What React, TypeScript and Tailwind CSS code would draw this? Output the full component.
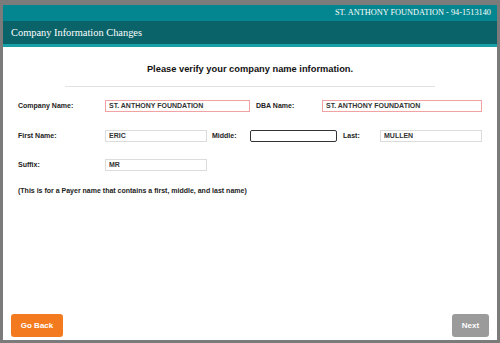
import React from "react";

const label = "text-[7px] font-bold text-[#222]";
const field =
  "h-[12px] bg-white px-[3px] text-[7px] font-bold text-[#333] leading-[10px] outline-none";

export default function App() {
  return (
    <div className="flex h-[343px] w-[500px] flex-col bg-[#7b7b7b] px-[3px] pt-[5px] pb-[3px] font-['Liberation_Sans',Arial,sans-serif]">
      {/* Header bars */}
      <div className="flex h-[16px] items-center justify-end bg-[#03868f] pr-[6px] font-['Liberation_Serif',serif] text-[8.3px] text-white">
        ST. ANTHONY FOUNDATION - 94-1513140
      </div>
      <div className="flex h-[23px] items-center bg-[#0a6369] pl-[8px] font-['Liberation_Serif',serif] text-[10.4px] text-white">
        Company Information Changes
      </div>
      <div className="h-[3px] bg-[#17a0a8]" />

      {/* Body */}
      <div className="flex flex-1 flex-col bg-white">
        <h1 className="mt-[16px] text-center text-[9.3px] font-bold text-[#111]">
          Please verify your company name information.
        </h1>
        <div className="mx-[62px] mt-[9px] h-px bg-[#e2e2e2]" />

        <div className="mt-[13px] flex items-center pl-[15px]">
          <span className={`${label} w-[87px]`}>Company Name:</span>
          <input
            readOnly
            value="ST. ANTHONY FOUNDATION"
            className={`${field} w-[145px] border border-[#f2a2a2]`}
          />
          <span className={`${label} ml-[6px] w-[66px]`}>DBA Name:</span>
          <input
            readOnly
            value="ST. ANTHONY FOUNDATION"
            className={`${field} w-[160px] border border-[#f2a2a2]`}
          />
        </div>

        <div className="mt-[18px] flex items-center pl-[15px]">
          <span className={`${label} w-[87px]`}>First Name:</span>
          <input
            readOnly
            value="ERIC"
            className={`${field} w-[102px] border border-[#dcdcdc]`}
          />
          <span className={`${label} ml-[5px] w-[38px]`}>Middle:</span>
          <input
            readOnly
            value=""
            className={`${field} w-[87px] rounded-[2px] border-[1.5px] border-[#333]`}
          />
          <span className={`${label} ml-[6px] w-[37px]`}>Last:</span>
          <input
            readOnly
            value="MULLEN"
            className={`${field} w-[102px] border border-[#dcdcdc]`}
          />
        </div>

        <div className="mt-[17px] flex items-center pl-[15px]">
          <span className={`${label} w-[87px]`}>Suffix:</span>
          <input
            readOnly
            value="MR"
            className={`${field} w-[102px] border border-[#dcdcdc]`}
          />
        </div>

        <p className={`${label} mt-[15px] pl-[15px]`}>
          (This is for a Payer name that contains a first, middle, and last name)
        </p>

        <div className="mt-auto flex items-center justify-between px-[8px] pb-[3px]">
          <button className="h-[23px] w-[52px] rounded-[3px] bg-[#f47a20] text-[8px] font-bold text-white">
            Go Back
          </button>
          <button className="h-[23px] w-[37px] rounded-[3px] bg-[#9b9b9b] text-[8px] font-bold text-white">
            Next
          </button>
        </div>
      </div>
    </div>
  );
}
